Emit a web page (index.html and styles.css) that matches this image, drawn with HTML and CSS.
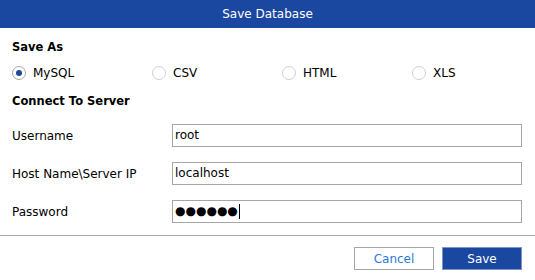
FILE: index.html
```html
<!DOCTYPE html>
<html>
<head>
<meta charset="utf-8">
<title>Save Database</title>
<link rel="stylesheet" href="styles.css">
</head>
<body>
<div class="dialog">
  <div class="titlebar">Save Database</div>
  <div class="content">
    <div class="section-title first">Save As</div>
    <div class="radios">
      <label class="option wide"><span class="radio checked"></span><span>MySQL</span></label>
      <label class="option"><span class="radio"></span><span>CSV</span></label>
      <label class="option"><span class="radio"></span><span>HTML</span></label>
      <label class="option last"><span class="radio"></span><span>XLS</span></label>
    </div>
    <div class="section-title second">Connect To Server</div>
    <div class="form">
      <div class="row">
        <div class="label">Username</div>
        <div class="field">root</div>
      </div>
      <div class="row">
        <div class="label">Host Name\Server IP</div>
        <div class="field">localhost</div>
      </div>
      <div class="row">
        <div class="label">Password</div>
        <div class="field password"><span class="dots">●●●●●●</span><span class="caret"></span></div>
      </div>
    </div>
  </div>
  <div class="divider"></div>
  <div class="footer">
    <button class="btn cancel">Cancel</button>
    <button class="btn save">Save</button>
  </div>
</div>
</body>
</html>
```

FILE: styles.css
```css
html, body {
  margin: 0;
  padding: 0;
  background: #ffffff;
}

body {
  font-family: "DejaVu Sans", "Liberation Sans", sans-serif;
  font-size: 12px;
  color: #000000;
}

.dialog {
  width: 535px;
  height: 280px;
  background: #ffffff;
  display: flex;
  flex-direction: column;
}

.titlebar {
  height: 28px;
  line-height: 28px;
  background: #1a47a0;
  color: #ffffff;
  text-align: center;
}

.content {
  padding: 0 13px 0 12px;
}

.section-title {
  font-weight: bold;
  font-size: 11.5px;
  line-height: 14px;
}

.section-title.first {
  margin-top: 12px;
}

.section-title.second {
  margin-top: 14px;
}

.radios {
  display: flex;
  margin-top: 12px;
  height: 14px;
  align-items: center;
}

.option {
  display: flex;
  align-items: center;
  gap: 7px;
  width: 130px;
  flex-shrink: 0;
  line-height: 14px;
}

.option.wide {
  width: 140px;
}

.option.last {
  width: auto;
}

.radio {
  width: 12px;
  height: 12px;
  border: 1px solid #cfcfcf;
  border-radius: 50%;
  background: #ffffff;
  display: flex;
  align-items: center;
  justify-content: center;
  box-sizing: content-box;
  flex-shrink: 0;
}

.radio.checked {
  border-color: #a8a8a8;
}

.radio.checked::after {
  content: "";
  width: 6px;
  height: 6px;
  border-radius: 50%;
  background: #1a47a0;
}

.form {
  display: flex;
  flex-direction: column;
  gap: 15px;
  margin-top: 16px;
}

.row {
  display: flex;
  align-items: center;
  height: 23px;
}

.label {
  width: 160px;
  line-height: 14px;
}

.field {
  flex: 1;
  height: 23px;
  box-sizing: border-box;
  border: 1px solid #a6a6a6;
  padding: 0 2px;
  line-height: 21px;
  display: flex;
  align-items: center;
}

.caret {
  width: 1px;
  height: 15px;
  background: #000000;
  margin-left: 1px;
}

.divider {
  height: 1px;
  background: #a8a8a8;
  margin-top: 12px;
}

.footer {
  display: flex;
  justify-content: flex-end;
  gap: 8px;
  padding: 11px 13px 0 0;
}

.btn {
  width: 80px;
  height: 23px;
  box-sizing: border-box;
  font-family: "DejaVu Sans", "Liberation Sans", sans-serif;
  font-size: 12px;
  padding: 0;
  margin: 0;
  cursor: pointer;
}

.cancel {
  background: #ffffff;
  border: 1px solid #a6a6a6;
  color: #2b7bd6;
}

.save {
  background: #1a47a0;
  border: 1px solid #7f95c4;
  color: #ffffff;
}
```
